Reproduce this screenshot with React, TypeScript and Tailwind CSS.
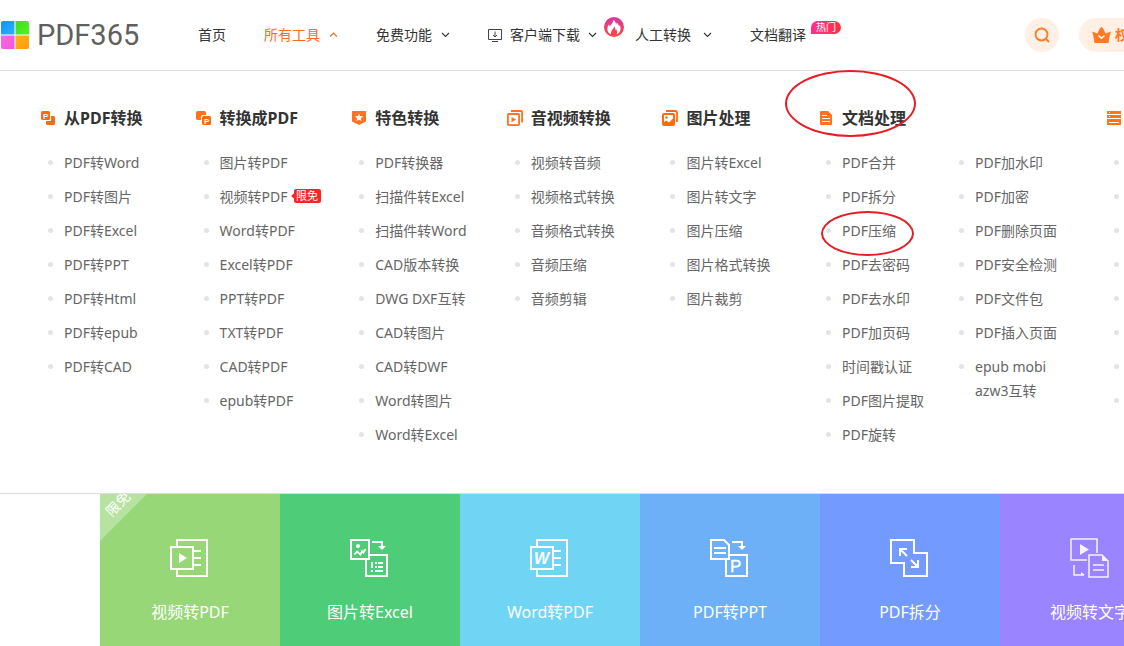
import type { ReactNode } from "react";

const Chevron = ({ up = false }: { up?: boolean }) => (
  <svg width="9" height="9" viewBox="0 0 9 9" fill="none" stroke="currentColor" strokeWidth="1.1">
    {up ? <path d="M1 5.500l3.500-3.500L8 5.500" /> : <path d="M1 2L4.500 5.500 8 2" />}
  </svg>
);

const Logo = () => (
  <a href="#" className="flex w-[198px] shrink-0 items-center gap-2 pl-px">
    <svg width="28" height="28" viewBox="0 0 28 28">
      <defs>
        <linearGradient id="blue" x1="0" y1="0" x2="1" y2="1"><stop stopColor="#0a93ff" /><stop offset="1" stopColor="#2fb0ff" /></linearGradient>
        <linearGradient id="green" x1="0" y1="0" x2="1" y2="1"><stop stopColor="#3ce01e" /><stop offset="1" stopColor="#52f41f" /></linearGradient>
        <linearGradient id="pink" x1="0" y1="0" x2="1" y2="1"><stop stopColor="#fb66e6" /><stop offset="1" stopColor="#ee58dc" /></linearGradient>
        <linearGradient id="amber" x1="0" y1="0" x2="1" y2="1"><stop stopColor="#ffb01f" /><stop offset="1" stopColor="#ff9c08" /></linearGradient>
      </defs>
      <path d="M2 0H13.500V13.500H0V2Q0 0 2 0Z" fill="url(#blue)" />
      <path d="M14.500 0H26Q28 0 28 2V13.500H14.500Z" fill="url(#green)" />
      <path d="M0 14.500H13.500V28H2Q0 28 0 26Z" fill="url(#pink)" />
      <path d="M14.500 14.500H28V26Q28 28 26 28H14.500Z" fill="url(#amber)" />
    </svg>
    <span className="font-['Roboto'] text-[29px] leading-7 text-[#5f5f5f]">PDF365</span>
  </a>
);

const MonitorIcon = () => (
  <svg width="14" height="14" viewBox="0 0 14 14" fill="none" stroke="#444" strokeWidth="1">
    <path d="M.5 1.500h13v10H.5zM4 13.500h6M7 3.500v5.500M5 7l2 2 2-2" />
  </svg>
);

const FireIcon = () => (
  <svg className="absolute -top-[8px] left-[116px]" width="20" height="20" viewBox="0 0 20 20">
    <defs>
      <linearGradient id="fire" x1="0" y1="0" x2="0" y2="1"><stop stopColor="#dc36a8" /><stop offset="1" stopColor="#ff463c" /></linearGradient>
    </defs>
    <circle cx="10" cy="10" r="10" fill="url(#fire)" />
    <path d="M7 17.500C4 16 2.800 13.500 3.500 10.500C3.800 9 4.500 8 5 7.500L5.800 9.500C6.500 7.500 9 6 9.700 3C11.500 4.200 12 6 11.800 7.500L13 5.500C13.500 7 15 8 15.300 9L16 8.500C17.500 12.500 15.800 16 12.800 17.500C13.500 15.500 13 13.500 12.300 12.500L11.500 13.500C11.500 12 11 10.500 10 9.500C10 12 6.500 13 7 17.500Z" fill="#fff" />
  </svg>
);

const CrownIcon = () => (
  <svg width="19" height="16" viewBox="0 0 19 16">
    <path d="M2.500 16Q1.800 10 .2 4.500L5.300 6.500L8 1.200Q9.500-.8 11 1.200L13.700 6.500L18.800 4.500Q17.200 10 16.500 16Z" fill="#ff7a22" />
    <path d="M6.500 8.500l3 2.800 3-2.800" fill="none" stroke="#fff" strokeWidth="1.500" />
  </svg>
);

const FromPdfIcon = () => (
  <svg width="16" height="16" viewBox="0 0 16 16">
    <rect x="1" y="1" width="9" height="9" rx="1.500" fill="#ff6a0e" />
    <path d="M11 6h2.500Q15 6 15 7.500v6q0 1.500-1.500 1.500H7.500Q6 15 6 13.500V11H11Z" fill="#ff6a0e" />
    <text x="3" y="8.500" fontSize="8" fill="#fff" className="font-['Liberation_Sans'] font-bold">P</text>
  </svg>
);

const ToPdfIcon = () => (
  <svg width="16" height="16" viewBox="0 0 16 16">
    <path d="M2 1h6.500Q10 1 10 2.500V5H6.500Q5 5 5 6.500V10H2Q0 10 0 8.500V2.500Q0 1 2 1Z" fill="#ff7220" />
    <rect x="6" y="6" width="9" height="9" rx="1.500" fill="#ff6a0e" />
    <text x="8" y="13.500" fontSize="8" fill="#fff" className="font-['Liberation_Sans'] font-bold">P</text>
  </svg>
);

const ShieldIcon = () => (
  <svg width="16" height="16" viewBox="0 0 16 16">
    <path d="M1 1H15V11.500L8 15 1 11.500Z" fill="#ff7220" />
    <path d="M8 3.500l1.200 2.600 2.900.3-2.200 1.900.7 2.800L8 9.700l-2.600 1.400.7-2.800-2.200-1.900 2.900-.3Z" fill="#fff" />
  </svg>
);

const MediaIcon = () => (
  <svg width="16" height="16" viewBox="0 0 16 16" fill="none" stroke="#ff7220" strokeWidth="1.800">
    <path d="M4 1H14Q15.100 1 15.100 2V12.500" />
    <rect x=".9" y="4" width="11.200" height="11.100" rx=".8" />
    <path d="M4.500 7v5.200L9.200 9.600Z" fill="#ff7220" stroke="none" />
  </svg>
);

const PictureIcon = () => (
  <svg width="16" height="16" viewBox="0 0 16 16">
    <path d="M4 1H13.500Q15 1 15 2.500V12" fill="none" stroke="#ff6a0e" strokeWidth="1.800" />
    <rect x="0" y="3" width="13" height="13" rx="2" fill="#ff6a0e" />
    <path d="M2 5h9v3.500L7 12.500 4.500 10.500 2 12Z" fill="#fff" />
    <circle cx="4.500" cy="7.500" r="1.200" fill="#ff6a0e" />
  </svg>
);

const DocIcon = () => (
  <svg width="16" height="16" viewBox="0 0 16 16">
    <path d="M3 1H10L14 5V14Q14 15 13 15H3Q2 15 2 14V2Q2 1 3 1Z" fill="#ff7220" />
    <path d="M4 5.500h5M4 8.500h8M4 11.500h8" stroke="#fff" strokeWidth="1.200" />
  </svg>
);

const ServerIcon = () => (
  <svg width="16" height="16" viewBox="0 0 16 16">
    <path d="M1 1h14v3H1zM1 5h14v3H1zM1 9h14v6H1z" fill="#ff7714" />
    <path d="M3 2h1v1H3zM3 6h1v1H3zM3 12h10v1H3z" fill="#fff" />
  </svg>
);

type Entry = { name: string; free?: boolean; marked?: boolean };

const toEntries = (names: string[]): Entry[] => names.map((name) => ({ name }));

const columns: { title: string; icon: ReactNode; items: Entry[] }[] = [
  { title: "从PDF转换", icon: <FromPdfIcon />, items: toEntries(["PDF转Word", "PDF转图片", "PDF转Excel", "PDF转PPT", "PDF转Html", "PDF转epub", "PDF转CAD"]) },
  {
    title: "转换成PDF",
    icon: <ToPdfIcon />,
    items: [{ name: "图片转PDF" }, { name: "视频转PDF", free: true }, ...toEntries(["Word转PDF", "Excel转PDF", "PPT转PDF", "TXT转PDF", "CAD转PDF", "epub转PDF"])],
  },
  { title: "特色转换", icon: <ShieldIcon />, items: toEntries(["PDF转换器", "扫描件转Excel", "扫描件转Word", "CAD版本转换", "DWG DXF互转", "CAD转图片", "CAD转DWF", "Word转图片", "Word转Excel"]) },
  { title: "音视频转换", icon: <MediaIcon />, items: toEntries(["视频转音频", "视频格式转换", "音频格式转换", "音频压缩", "音频剪辑"]) },
  { title: "图片处理", icon: <PictureIcon />, items: toEntries(["图片转Excel", "图片转文字", "图片压缩", "图片格式转换", "图片裁剪"]) },
];

const docLeft: Entry[] = [
  ...toEntries(["PDF合并", "PDF拆分"]),
  { name: "PDF压缩", marked: true },
  ...toEntries(["PDF去密码", "PDF去水印", "PDF加页码", "时间戳认证", "PDF图片提取", "PDF旋转"]),
];
const docRight = toEntries(["PDF加水印", "PDF加密", "PDF删除页面", "PDF安全检测", "PDF文件包", "PDF插入页面", "epub mobi azw3互转"]);

const ItemList = ({ items }: { items: Entry[] }) => (
  <ul className="flex flex-col gap-[10px]">
    {items.map((item, i) => (
      <li key={i} className="relative flex min-h-6 gap-[11px] pl-2 text-sm leading-6 text-[#666]">
        <span className="mt-[9px] h-[5px] w-[5px] shrink-0 rounded-full bg-[#e4e4e4]" />
        <a href="#" className="max-w-[100px]">{item.name}</a>
        {item.free && (
          <span className="relative -ml-[5px] mt-1 h-[14px] w-[27px] rounded-xs bg-[#ff2424] text-center text-[11px] leading-[14px] text-white">
            <i className="absolute top-[5px] -left-[2px] h-1 w-1 rotate-45 bg-[#ff2424]" />
            限免
          </span>
        )}
        {item.marked && <span className="absolute -top-2 left-[3px] h-[45px] w-[93px] rounded-[50%] border-2 border-[#e81c24]" />}
      </li>
    ))}
  </ul>
);

const Heading = ({ icon, title }: { icon: ReactNode; title: string }) => (
  <h3 className="mb-[21px] flex h-6 items-center gap-2 text-base font-bold text-[#333]">
    {icon}
    {title}
  </h3>
);

const TileSvg = ({ children, soft = false }: { children: ReactNode; soft?: boolean }) => (
  <svg width="40" height="40" viewBox="0 0 40 40" fill="none" stroke="#fff" strokeWidth={soft ? 1.5 : 2} opacity={soft ? 0.9 : 1} overflow="visible">
    {children}
  </svg>
);

const Pages = () => <path d="M7 7V1H37V37H7V31M1 8H23V30H1ZM24 12h7M24 19h7M24 26h7" />;
const TurnArrow = () => (
  <>
    <path d="M22 3H32V8" />
    <path d="M28 7h8l-4 4z" fill="#fff" stroke="none" />
    <path d="M16 21V37H37V16H20" />
  </>
);

const tiles = [
  {
    name: "视频转PDF",
    bg: "bg-[#98d778]",
    icon: <TileSvg><Pages /><path d="M9 14v10l8-5z" fill="#fff" stroke="none" /></TileSvg>,
  },
  {
    name: "图片转Excel",
    bg: "bg-[#4ecc78]",
    icon: (
      <TileSvg>
        <path d="M1 1H19V20H1Z" />
        <TurnArrow />
        <circle cx="8" cy="7" r="2" fill="#fff" stroke="none" />
        <path d="M4.500 15.500L7 12.500 10.500 15.500 12 12 13.500 13.500 15.500 10" strokeWidth="1.800" />
        <path d="M21 23h2v6h-2zM25 23h2v2h-2zM28 23h5v2h-5zM25 27h2v2h-2zM28 27h5v2h-5zM21 31h2v2h-2zM25 31h8v2h-8z" fill="#fff" stroke="none" />
      </TileSvg>
    ),
  },
  {
    name: "Word转PDF",
    bg: "bg-[#70d4f4]",
    icon: <TileSvg><Pages /><text x="4" y="25" fontSize="16" fill="#fff" stroke="none" className="font-['Liberation_Sans'] font-bold italic">W</text></TileSvg>,
  },
  {
    name: "PDF转PPT",
    bg: "bg-[#6db0f7]",
    icon: (
      <TileSvg>
        <path d="M14 1H1V20H19V6ZM4 9h12M4 14h12" />
        <TurnArrow />
        <text x="20" y="33" fontSize="17" fill="#fff" stroke="#fff" strokeWidth=".4" className="font-['Liberation_Sans']">P</text>
      </TileSvg>
    ),
  },
  {
    name: "PDF拆分",
    bg: "bg-[#729aff]",
    icon: <TileSvg><path d="M1 1H24V14H37V37H14V24H1ZM10 17V10H17M10 10l7 7M28 21V28H21M28 28l-7-7" /></TileSvg>,
  },
  {
    name: "视频转文字",
    bg: "bg-[#9a84ff]",
    icon: (
      <TileSvg soft>
        <path d="M17 21H1V0H27V14M19 16H32L38 22V38H19ZM23 26h11M23 31h11M4 26V36H14" />
        <path d="M10 5v11l9-5.500zM32 16v6h6zM11 33l4 3h-4z" fill="#fff" stroke="none" />
      </TileSvg>
    ),
  },
];

const Header = () => (
  <header className="flex h-[71px] min-w-[1224px] items-center border-b border-[#dcdcdc]">
    <Logo />
    <nav className="flex shrink-0 items-center gap-[38px] text-sm text-[#333]">
      <a href="#">首页</a>
      <a href="#" className="flex items-center gap-[9px] text-[#ff6b1f]">所有工具<Chevron up /></a>
      <a href="#" className="flex items-center gap-[9px]">免费功能<Chevron /></a>
      <a href="#" className="relative flex items-center gap-2">
        <MonitorIcon />客户端下载<Chevron />
        <FireIcon />
      </a>
      <a href="#" className="flex items-center gap-3">人工转换<Chevron /></a>
      <a href="#" className="relative">
        文档翻译
        <span className="absolute -top-1 left-[61px] h-[13px] w-[30px] rounded-t-full rounded-br-full bg-linear-to-r from-[#ff2d92] to-[#ff3036] text-center text-[10px] leading-[13px] text-white">热门</span>
      </a>
    </nav>
    <button aria-label="搜索" className="ml-[219px] flex h-[34px] w-[34px] shrink-0 items-center justify-center rounded-full bg-[#fff0e6]">
      <svg width="16" height="16" viewBox="0 0 16 16" fill="none" stroke="#ff7a22" strokeWidth="1.800" strokeLinecap="round">
        <circle cx="7.500" cy="7.500" r="6" />
        <path d="M12 12l2.500 2.500" />
      </svg>
    </button>
    <button className="ml-5 flex h-[34px] shrink-0 items-center gap-1 rounded-full bg-[#fff0e6] px-[13px] text-sm font-bold text-[#ff7a22]">
      <CrownIcon />权益中心
    </button>
  </header>
);

const ToolMenu = () => (
  <section className="grid w-[1222px] grid-cols-[repeat(5,1fr)_288px_156px] pt-[35px] pb-[46px]">
    {columns.map((col) => (
      <div key={col.title}>
        <Heading icon={col.icon} title={col.title} />
        <ItemList items={col.items} />
      </div>
    ))}
    <div className="relative">
      <Heading icon={<DocIcon />} title="文档处理" />
      <span className="absolute -top-9 -left-[33px] h-[67px] w-[131px] rounded-[50%] border-2 border-[#e81c24]" />
      <div className="grid grid-cols-[133px_133px]">
        <ItemList items={docLeft} />
        <ItemList items={docRight} />
      </div>
    </div>
    <div>
      <Heading icon={<ServerIcon />} title="" />
      <ItemList items={toEntries(Array(8).fill(""))} />
    </div>
  </section>
);

const App = () => {
  return (
    <div className="flex min-h-screen flex-col overflow-hidden bg-white font-['Noto_Sans','Noto_Sans_CJK_SC',sans-serif]">
      <Header />
      <div className="border-b border-[#dcdcdc] pl-10">
        <ToolMenu />
      </div>
      <main className="ml-[100px] flex flex-1">
        {tiles.map((tile, i) => (
          <a key={tile.name} href="#" className={`relative flex w-[180px] shrink-0 flex-col items-center overflow-hidden pt-[45px] text-base text-white ${tile.bg}`}>
            {i === 0 && (
              <span className="absolute top-0 left-0 h-[47px] w-[47px] bg-white/30 [clip-path:polygon(0_0,100%_0,0_100%)]">
                <span className="absolute top-[3px] left-1 block w-7 -rotate-45 text-center text-sm leading-[14px]">限免</span>
              </span>
            )}
            {tile.icon}
            <span className="mt-[21px] leading-6">{tile.name}</span>
          </a>
        ))}
      </main>
    </div>
  );
};

export default App;
